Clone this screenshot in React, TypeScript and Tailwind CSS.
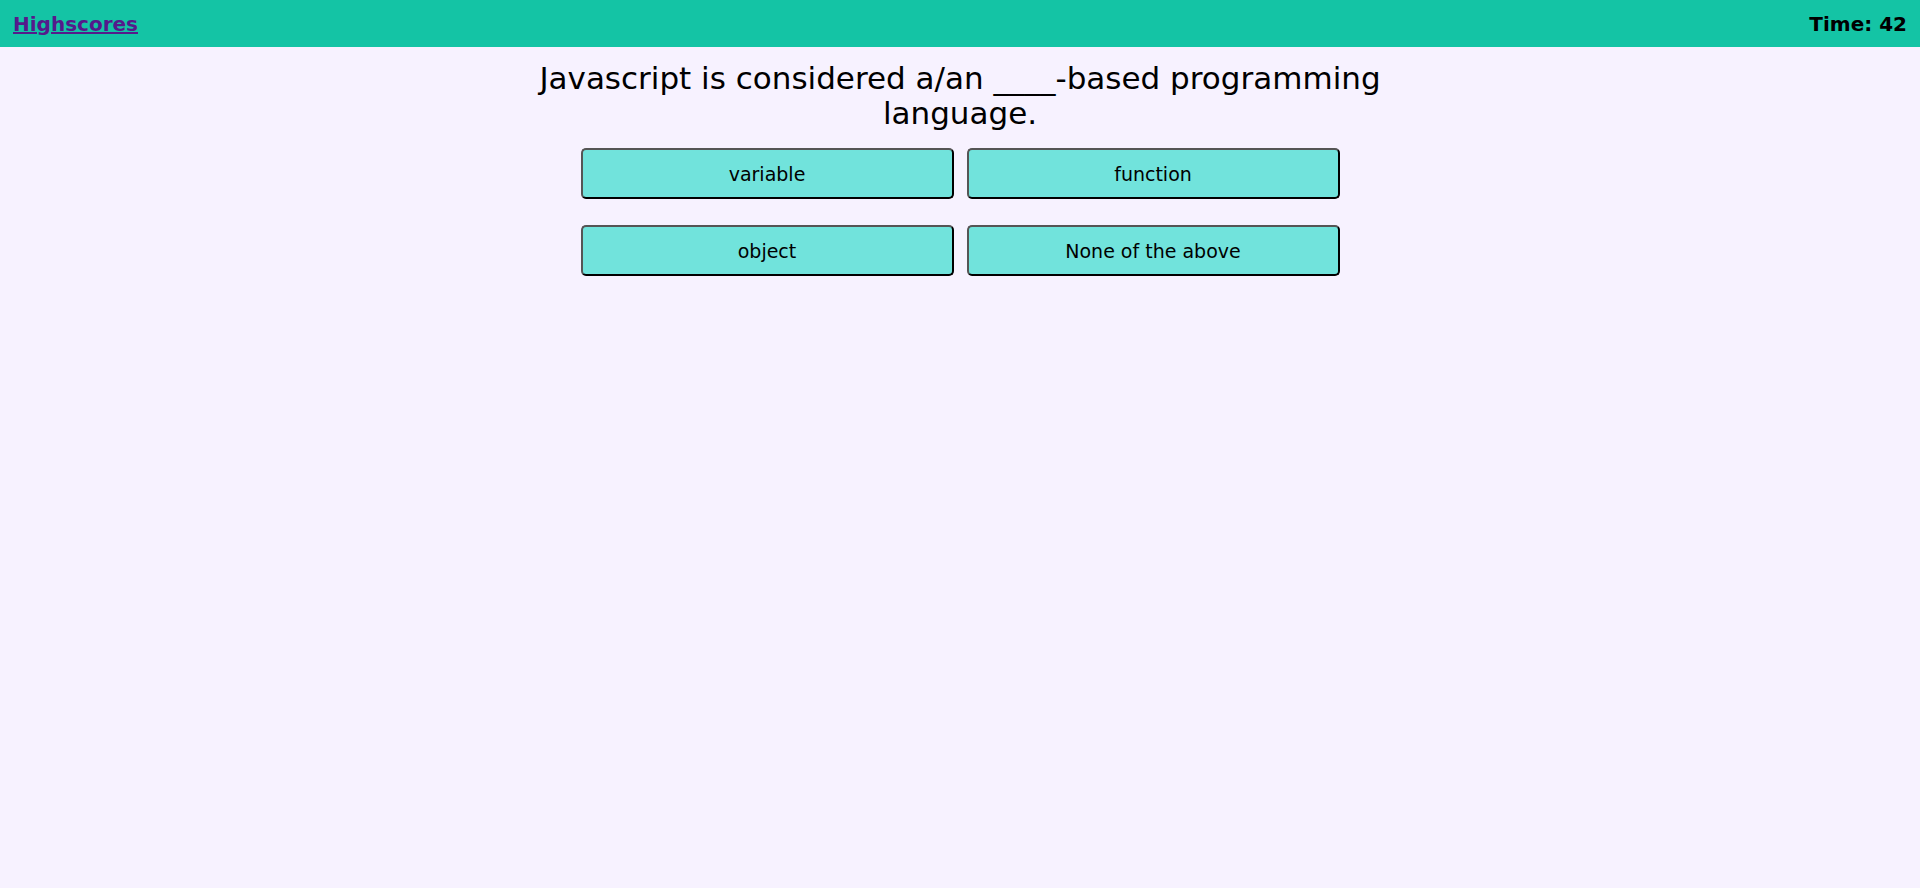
import React from "react";

const answers = ["variable", "function", "object", "None of the above"];

export default function App() {
  return (
    <div
      className="min-h-[888px] bg-[#F7F2FF] text-black"
      style={{ fontFamily: '"DejaVu Sans", Verdana, sans-serif' }}
    >
      <header className="flex h-[47px] items-center justify-between bg-[#14C4A5] px-[13px]">
        <a href="#" className="text-[20px] font-bold text-[#551A8B] underline">
          Highscores
        </a>
        <div className="text-[20px] font-bold">Time: 42</div>
      </header>
      <main className="flex flex-col items-center">
        <h2 className="mt-[14px] w-[900px] text-center text-[31px] leading-[35px]">
          Javascript is considered a/an ____-based programming language.
        </h2>
        <div className="mt-[17px] grid grid-cols-[373px_373px] gap-x-[13px] gap-y-[26px]">
          {answers.map((a) => (
            <button
              key={a}
              className="h-[51px] rounded-[5px] border-2 border-b-black border-l-[#555] border-r-black border-t-[#555] bg-[#71E3DC] pt-[2px] text-[19px]"
            >
              {a}
            </button>
          ))}
        </div>
      </main>
    </div>
  );
}
